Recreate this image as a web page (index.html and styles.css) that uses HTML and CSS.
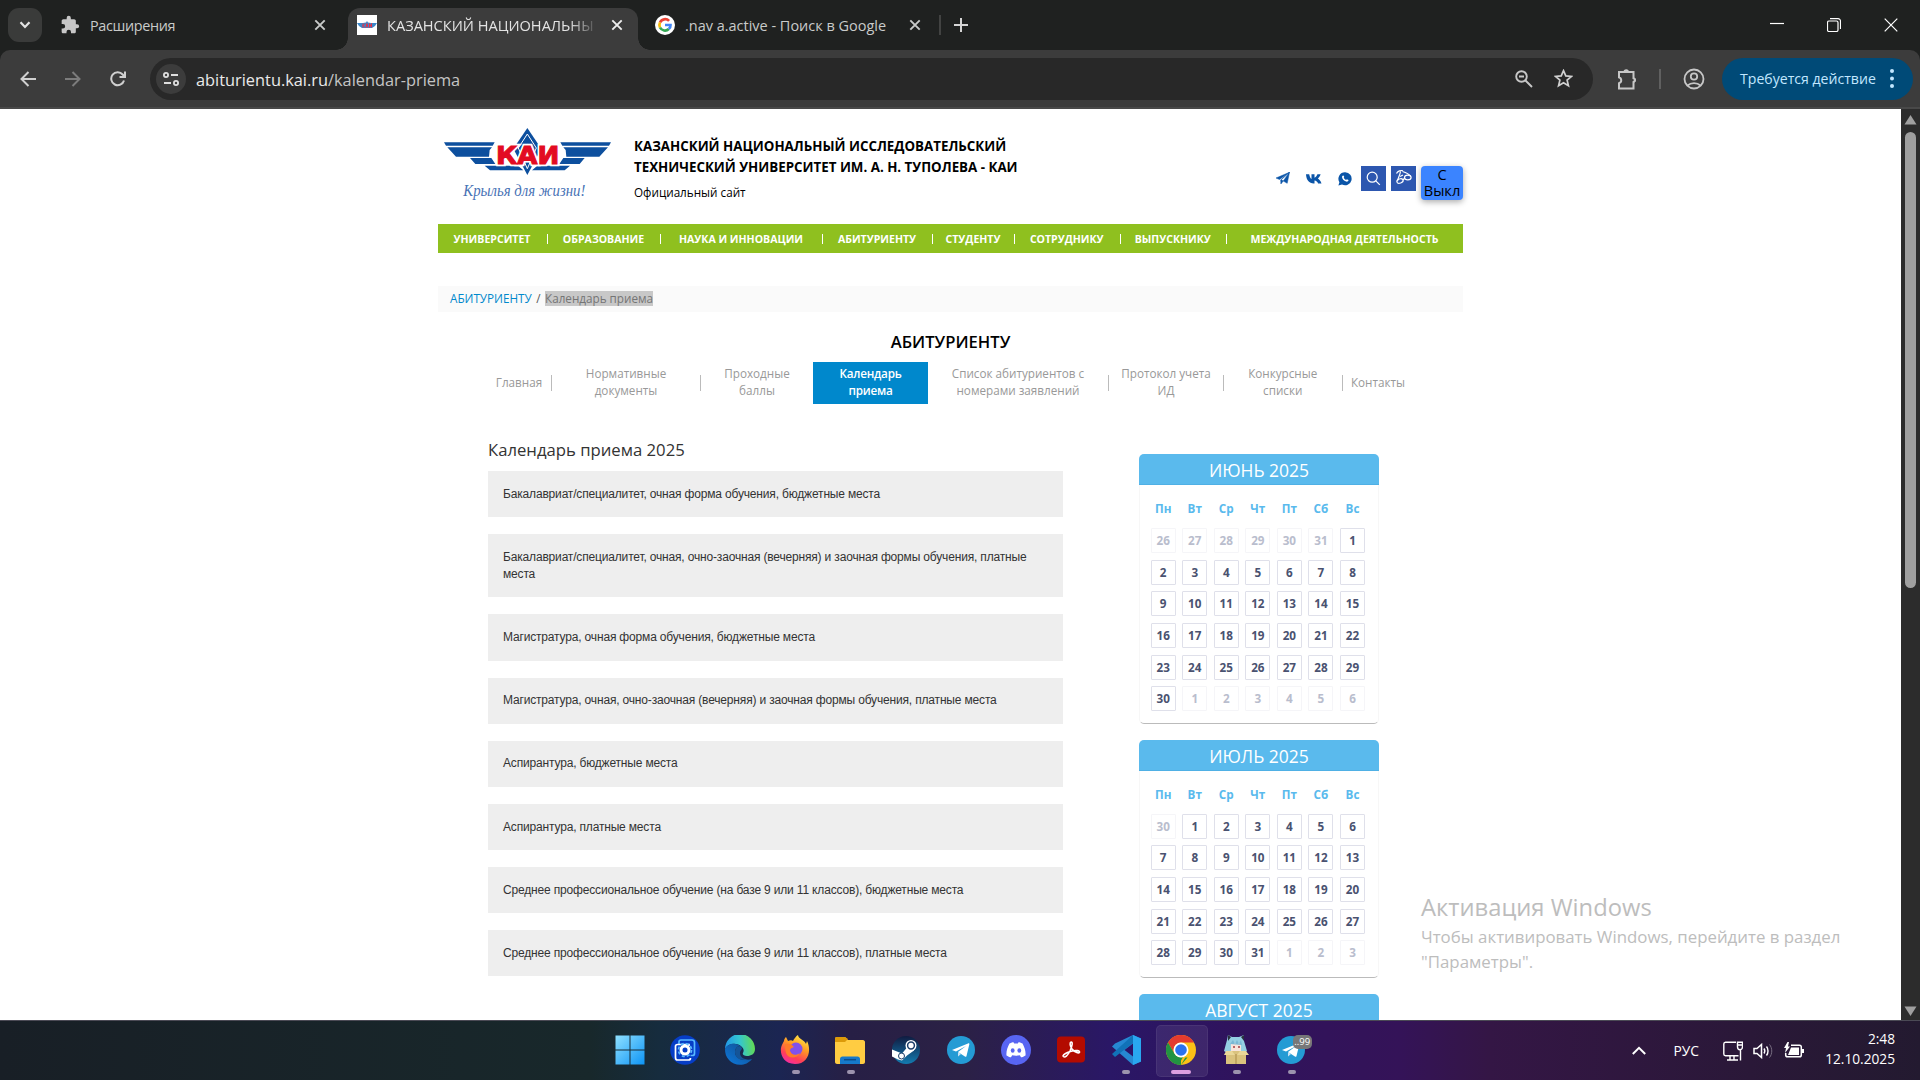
FILE: index.html
```html
<!DOCTYPE html>
<html lang="ru">
<head>
<meta charset="utf-8">
<title>Календарь приема</title>
<link rel="stylesheet" href="styles.css">
</head>
<body>
<div class="screen">
<header class="tabs">
  <span class="tab-search"><svg width="12" height="8" viewBox="0 0 12 8"><path d="M1.5 1.2 6 6l4.500-4.800" fill="none" stroke="#e3e3e3" stroke-width="2.200"/></svg></span>
  <div class="tab t1">
    <svg width="20" height="20" viewBox="0 0 24 24" fill="#c7c7c7"><path d="M20.500 11H19V7c0-1.100-.9-2-2-2h-4V3.500a2.500 2.500 0 0 0-5 0V5H4c-1.100 0-2 .9-2 2v3.800h1.500a2.700 2.700 0 0 1 0 5.400H2V20c0 1.100.9 2 2 2h3.800v-1.500a2.700 2.700 0 0 1 5.400 0V22H17c1.100 0 2-.9 2-2v-4h1.500a2.500 2.500 0 0 0 0-5z"/></svg>
    <span class="tab-title narrow">Расширения</span>
    <svg class="x" width="12" height="12" viewBox="0 0 12 12"><path d="M1.300 1.300l9.400 9.400M10.700 1.300l-9.400 9.400"/></svg>
  </div>
  <div class="tab t2">
    <svg width="20" height="20" viewBox="0 0 20 20"><path fill="#fff" d="M0 0h20v20H0z"/><path fill="#3b86c8" d="M0 8h6l3-.5L10 6l1 1.500 3 .5h6l-2 3-3 2H5l-3-2z"/><path d="M6 8.500v4M8 8.500l-2 2 2 2M9 12.500l1-4 1 4M12.500 8.500v4l2-4v4" stroke="#e2324b" fill="none"/></svg>
    <span class="tab-title fade">КАЗАНСКИЙ НАЦИОНАЛЬНЫ</span>
    <svg class="x" width="12" height="12" viewBox="0 0 12 12"><path d="M1.300 1.300l9.400 9.400M10.700 1.300l-9.400 9.400"/></svg>
  </div>
  <div class="tab t3">
    <svg width="20" height="20" viewBox="0 0 20 20"><circle cx="10" cy="10" r="10" fill="#fff"/><g fill="none" stroke-width="2.700"><path stroke="#ea4335" d="M14.100 5.900A5.600 5.600 0 0 0 5 7.500"/><path stroke="#fbbc05" d="M5 7.500a5.600 5.600 0 0 0 0 5"/><path stroke="#34a853" d="M5 12.500a5.600 5.600 0 0 0 8.800 1.600"/><path stroke="#4285f4" d="M13.800 14.100A5.300 5.300 0 0 0 15.500 10H10"/></g></svg>
    <span class="tab-title">.nav a.active - Поиск в Google</span>
    <svg class="x" width="12" height="12" viewBox="0 0 12 12"><path d="M1.300 1.300l9.400 9.400M10.700 1.300l-9.400 9.400"/></svg>
  </div>
  <i class="tab-sep"></i>
  <svg class="plus" width="14" height="14" viewBox="0 0 14 14"><path d="M7 0v14M0 7h14" stroke="#d5d5d5" stroke-width="2"/></svg>
  <div class="win">
    <svg width="14" height="14" viewBox="0 0 14 14"><path d="M0 5.500h14"/></svg>
    <svg width="14" height="14" viewBox="0 0 14 14"><rect x=".5" y="3" width="10.500" height="10.500" rx="1.500"/><path d="M3 .7h8a2.500 2.500 0 0 1 2.500 2.500V11"/></svg>
    <svg width="14" height="14" viewBox="0 0 14 14"><path d="M.7.7l12.600 12.600M13.300.7.700 13.300"/></svg>
  </div>
</header>
<div class="toolbar">
  <svg class="nb" width="16" height="16" viewBox="0 0 16 16"><path d="M16 8H1.500M8.500 1 1.500 8l7 7"/></svg>
  <svg class="nb dim" width="16" height="16" viewBox="0 0 16 16"><path d="M0 8h14.500M7.500 1l7 7-7 7"/></svg>
  <svg class="nb" width="16" height="16" viewBox="0 0 16 16"><path d="M14 9.500A6.500 6.500 0 1 1 12.700 3.500L14.800 6M15 .5V6H9.500"/></svg>
  <div class="omni">
    <span class="chip"><svg width="16" height="14" viewBox="0 0 16 14" fill="none" stroke="#dedede" stroke-width="1.800"><circle cx="3" cy="3" r="2.100"/><path d="M8 3h7M1 11h7"/><circle cx="13" cy="11" r="2.100"/></svg></span>
    <span class="url">abiturientu.kai.ru<span>/kalendar-priema</span></span>
    <svg class="lens" width="18" height="18" viewBox="0 0 18 18" fill="none" stroke="#c7c7c7" stroke-width="1.900"><circle cx="6.500" cy="6.500" r="5.300"/><path d="M10.500 10.500 17 17M4 6.500h5"/></svg>
    <svg class="star" width="19" height="19" viewBox="0 0 20 20" fill="none" stroke="#d0d0d0" stroke-width="1.800"><path d="M10 1.800l2.400 5.500 6 .5-4.600 3.900 1.400 5.900L10 14.500l-5.200 3.100 1.400-5.900L1.600 7.800l6-.5z"/></svg>
  </div>
  <svg class="ext" width="21" height="22" viewBox="0 0 21 22"><path d="M2 4h14.500v6.200a2 2 0 0 1 0 3.800v6.500H2v-5.300a3 3 0 0 0 0-5.800z" fill="none" stroke="#c7c7c7" stroke-width="2"/><path d="M6.500 4a2.700 2.700 0 0 1 5.400 0M17 9.500a2.700 2.700 0 0 1 0 5.200" fill="#c7c7c7"/></svg>
  <i class="bar-sep"></i>
  <svg class="avatar" width="22" height="22" viewBox="0 0 22 22" fill="none" stroke="#c7c7c7" stroke-width="1.800"><circle cx="11" cy="11" r="9.500"/><circle cx="11" cy="8.500" r="3.200"/><path d="M4.500 17.500c3.500-3.300 9.500-3.300 13 0"/></svg>
  <div class="action">Требуется действие<svg width="4" height="19" viewBox="0 0 4 19" fill="#c2e7ff"><circle cx="2" cy="2" r="2"/><circle cx="2" cy="9.500" r="2"/><circle cx="2" cy="17" r="2"/></svg></div>
</div>

<div class="view">
<main class="page">
  <div class="head">
    <svg class="logo" width="180" height="95" viewBox="0 0 540 285">
      <g fill="#0d4f9e"><path d="M12 67h152l-6 10H18zM22 82h134l-7 8-2 20H48z"/><path d="M513 67H361l6 10h140zM504 82H370l7 8 2 20h99z"/><path d="M90 114h64l12 18h-60zM434 114h-64l-12 18h61zM134 137h100l16 14H150zM390 137H292l-16 14h98z"/><path d="M262 24l42 62-42 79-42-79z"/></g>
      <path d="M262 42l27 42-27 62-27-62z" fill="none" stroke="#fff" stroke-width="3"/>
      <text x="168" y="131" textLength="190" lengthAdjust="spacingAndGlyphs" class="kai-edge">КАИ</text>
      <text x="168" y="131" textLength="190" lengthAdjust="spacingAndGlyphs" class="kai">КАИ</text>
      <text x="70" y="229" textLength="366" lengthAdjust="spacingAndGlyphs" class="motto">Крылья для жизни!</text>
    </svg>
    <div class="name"><b>КАЗАНСКИЙ НАЦИОНАЛЬНЫЙ ИССЛЕДОВАТЕЛЬСКИЙ<br>ТЕХНИЧЕСКИЙ УНИВЕРСИТЕТ ИМ. А. Н. ТУПОЛЕВА - КАИ</b><span>Официальный сайт</span></div>
    <div class="social">
      <svg width="14" height="13" viewBox="0 0 14 13"><path d="M13.500.3 0 6l3.500 1.500zM13.500.3 4.700 7.900 4.900 12l2-2.500zM13.500.3l-2.300 11-6-3.500z" fill="#0b55a8" stroke="#0b55a8" stroke-width=".5"/></svg>
      <svg width="16" height="10" viewBox="0 0 16 10"><path d="M0 .3h3.200C3.600 3 4.800 4.700 5.500 5V.3h3v3.500C9.600 3.500 10.800 2 11.400.3h3.200c-.4 1.800-1.800 3.400-2.700 4.200 1.100.7 2.700 2 3.600 5h-3.400C11.400 8 10.300 6.800 8.500 6.600v2.900C3.600 9.900.3 6.500 0 .3z" fill="#0b55a8"/></svg>
      <svg width="14" height="14" viewBox="0 0 14 14"><path d="M7.200.3a6.500 6.500 0 1 1-3.200 12.200L.4 13.600l1-3.400A6.500 6.500 0 0 1 7.200.3z" fill="#0b55a8"/><path d="M4.700 3.700c.9-.6 1.400.3 1.500 1.400l-.5.7c.5 1.100 1.300 1.800 2.300 2.200l.9-.8 1.600.9c0 1.200-1.300 1.800-2.400 1.500C5.800 9 4 6.500 4 5c0-.6.3-1.100.7-1.300z" fill="#fff"/></svg>
    </div>
    <span class="sq"><svg width="15" height="15" viewBox="0 0 15 15" fill="none" stroke="#fff" stroke-width="1.200"><circle cx="6.200" cy="6.200" r="5"/><path d="M9.800 9.800l4 4"/></svg></span>
    <span class="sq eye"><svg width="17" height="16" viewBox="0 0 17 16" fill="none" stroke="#fff" stroke-width="1.200"><path d="M1.500 4.500C2.500 2 6 1 8 1.800M5.500 2.500C5 6 3 9 2.500 12M7.500 2.500c3 1 6.500 2.500 8 4.500"/><ellipse cx="5" cy="12" rx="3.200" ry="2.100" transform="rotate(-20 5 12)"/><ellipse cx="12.800" cy="8.500" rx="3.300" ry="2.300"/><path d="M8 11l1.800-2M5 7.500l3-1.500"/></svg></span>
    <span class="toggle">С<br>Выкл</span>
  </div>
  <nav class="menu"><a>УНИВЕРСИТЕТ</a><a>ОБРАЗОВАНИЕ</a><a>НАУКА И ИННОВАЦИИ</a><a>АБИТУРИЕНТУ</a><a>СТУДЕНТУ</a><a>СОТРУДНИКУ</a><a>ВЫПУСКНИКУ</a><a>МЕЖДУНАРОДНАЯ ДЕЯТЕЛЬНОСТЬ</a></nav>
  <div class="crumbs"><a>АБИТУРИЕНТУ</a><i>/</i><span>Календарь приема</span></div>
  <h1>АБИТУРИЕНТУ</h1>
  <nav class="sub"><a>Главная</a><a>Нормативные<br>документы</a><a class="last">Проходные<br>баллы</a><a class="active">Календарь<br>приема</a><a>Список абитуриентов с<br>номерами заявлений</a><a>Протокол учета<br>ИД</a><a>Конкурсные<br>списки</a><a class="last">Контакты</a></nav>
  <div class="cols">
    <section class="list">
      <h2>Календарь приема 2025</h2>
      <div>Бакалавриат/специалитет, очная форма обучения, бюджетные места</div>
      <div>Бакалавриат/специалитет, очная, очно-заочная (вечерняя) и заочная формы обучения, платные места</div>
      <div>Магистратура, очная форма обучения, бюджетные места</div>
      <div>Магистратура, очная, очно-заочная (вечерняя) и заочная формы обучения, платные места</div>
      <div>Аспирантура, бюджетные места</div>
      <div>Аспирантура, платные места</div>
      <div>Среднее профессиональное обучение (на базе 9 или 11 классов), бюджетные места</div>
      <div>Среднее профессиональное обучение (на базе 9 или 11 классов), платные места</div>
    </section>
    <aside class="months">
      <section class="month"><h3>ИЮНЬ 2025</h3>
        <div class="week"><b>Пн</b><b>Вт</b><b>Ср</b><b>Чт</b><b>Пт</b><b>Сб</b><b>Вс</b></div>
        <div class="days"><s>26</s><s>27</s><s>28</s><s>29</s><s>30</s><s>31</s><b>1</b><b>2</b><b>3</b><b>4</b><b>5</b><b>6</b><b>7</b><b>8</b><b>9</b><b>10</b><b>11</b><b>12</b><b>13</b><b>14</b><b>15</b><b>16</b><b>17</b><b>18</b><b>19</b><b>20</b><b>21</b><b>22</b><b>23</b><b>24</b><b>25</b><b>26</b><b>27</b><b>28</b><b>29</b><b>30</b><s>1</s><s>2</s><s>3</s><s>4</s><s>5</s><s>6</s></div>
      </section>
      <section class="month"><h3>ИЮЛЬ 2025</h3>
        <div class="week"><b>Пн</b><b>Вт</b><b>Ср</b><b>Чт</b><b>Пт</b><b>Сб</b><b>Вс</b></div>
        <div class="days"><s>30</s><b>1</b><b>2</b><b>3</b><b>4</b><b>5</b><b>6</b><b>7</b><b>8</b><b>9</b><b>10</b><b>11</b><b>12</b><b>13</b><b>14</b><b>15</b><b>16</b><b>17</b><b>18</b><b>19</b><b>20</b><b>21</b><b>22</b><b>23</b><b>24</b><b>25</b><b>26</b><b>27</b><b>28</b><b>29</b><b>30</b><b>31</b><s>1</s><s>2</s><s>3</s></div>
      </section>
      <section class="month"><h3>АВГУСТ 2025</h3></section>
    </aside>
  </div>
</main>
<div class="scroll"><svg width="13" height="10" viewBox="0 0 13 10"><path d="M6.500 0 12.500 9.500H.5z"/></svg><i></i><svg class="down" width="13" height="10" viewBox="0 0 13 10"><path d="M6.500 10 12.500.5H.5z"/></svg></div>
<div class="watermark"><p>Активация Windows</p>Чтобы активировать Windows, перейдите в раздел<br>"Параметры".</div>
</div>

<footer class="taskbar">
  <div class="apps">
    <span><svg width="30" height="30" viewBox="0 0 30 30"><defs><linearGradient id="w" x1="0" y1="0" x2="1" y2="1"><stop stop-color="#8fe0ff"/><stop offset="1" stop-color="#0d94f5"/></linearGradient></defs><path fill="url(#w)" d="M.5.500h14v14H.500zM15.500.500h14v14h-14zM.500 15.500h14v14H.500zM15.500 15.500h14v14h-14z"/></svg></span>
    <span><svg width="30" height="30" viewBox="0 0 30 30"><circle cx="15" cy="15" r="14.800" fill="#063dc6"/><g fill="none" stroke-width="1.700"><path d="M9 9V7c0-1 1-2 2-2h11c1.500 0 2.500 1 2.500 2.500v11c0 1-1 2-2 2h-2" stroke="#58b8ff"/><path d="M19 11V9.500H7.500c-1.500 0-2 1-2 2v11c0 1.500 1 2.500 2 2.500h11c1.500 0 2-1 2-2" stroke="#fff"/><circle cx="15" cy="15" r="4" stroke="#fff" stroke-width="3"/><circle cx="15" cy="15" r="6.500" stroke="#58b8ff" stroke-dasharray="3 2.100"/></g></svg></span>
    <span><svg width="30" height="30" viewBox="0 0 30 30"><defs><linearGradient id="e1" y1=".5" y2=".4"><stop stop-color="#2196e8"/><stop offset=".5" stop-color="#34c6d0"/><stop offset="1" stop-color="#65dc4c"/></linearGradient><linearGradient id="e2" y1="1" x2="1" y2="0"><stop stop-color="#0d79dc"/><stop offset="1" stop-color="#124c8d"/></linearGradient></defs><path d="M0 14A15 15 0 0 1 30 14c0 5-4 7-8 7-3 0-5-1.500-4-3 1-2 1-4-1-6C12 7 3 8 0 14z" fill="url(#e1)"/><path d="M0 14c2-5 10-7 15-3-3 0-5 3-5 6 0 6 7 10 17 7-6 8-18 7-23 1-3-3-4-7-4-11z" fill="url(#e2)"/><path d="M15 11c-3 0-5 3-5 6 0 6 7 11 17 6-6 3-12 0-12-5 0-2 1-3 2-4 0-1-1-3-2-3z" fill="#155598"/></svg></span>
    <span class="run"><svg width="30" height="30" viewBox="0 0 30 30"><defs><linearGradient id="f" x1=".8" y1="0" x2=".3" y2="1"><stop stop-color="#fff14a"/><stop offset=".4" stop-color="#ff9b23"/><stop offset=".75" stop-color="#ff4056"/><stop offset="1" stop-color="#f32ba4"/></linearGradient></defs><path d="M4 6c0-2 1-3 2-4l2 4c2-1 4-1 5 0 1-2 3-5 5-6 0 4 7 5 8 9l1-3c5 10 1 23-12 23C4 29 0 20 1 13c.500-3 2-5 3-7z" fill="url(#f)"/><circle cx="16" cy="14" r="6.500" fill="#8151ec"/><path d="M5 9c4-1 7 0 9 3-2 1-4 1-4 4 1 4 6 5 10 2-3 6-12 6-14 0-1-4-1-6-1-9z" fill="#ff7b29"/></svg></span>
    <span class="run"><svg width="30" height="30" viewBox="0 0 30 30"><path d="M0 3.500C0 2.500 1 2 2 2h8l3 3h15c1 0 2 1 2 2v20c0 1-1 2-2 2H2c-1 0-2-1-2-2z" fill="#ffcc42"/><path d="M0 3.500C0 2.500 1 2 2 2h8l3 2-3 3H0z" fill="#dc9a09"/><path d="M5 29v-5c0-1.500 1-2.500 2.500-2.500h15c1.500 0 2.500 1 2.500 2.500v5z" fill="#1679ca"/><path d="M9 24.700h12" stroke="#0b4c8a" stroke-width="1.500"/></svg></span>
    <span><svg width="30" height="30" viewBox="0 0 30 30"><defs><linearGradient id="s" x2="0" y2="1"><stop stop-color="#101b40"/><stop offset="1" stop-color="#137bb0"/></linearGradient></defs><circle cx="15" cy="15" r="14" fill="url(#s)"/><path d="M1 14.500l10 4 5-6 6-1 1 4-7 5-5 5-4-1-6-3z" fill="#fff"/><circle cx="20" cy="10.500" r="5.500" fill="#fff"/><circle cx="20" cy="10.500" r="3.400" fill="none" stroke="#183b67" stroke-width="1.500"/><circle cx="10.500" cy="21" r="3" fill="none" stroke="#183b67"/></svg></span>
    <span><svg width="30" height="30" viewBox="0 0 30 30"><circle cx="15" cy="15" r="14" fill="#249bd4"/><path d="M6 15 22 8.500c1-.4 1.500.2 1.300 1L20.500 21c-.2 1-1 1-1.600.6L12 17l8-6-10 5.500z" fill="#fff"/><path d="M12 17v4.500l3-2.500z" fill="#c8e3f3"/></svg></span>
    <span><svg width="30" height="30" viewBox="0 0 30 30"><circle cx="15" cy="15" r="15" fill="#5865f2"/><path d="M8.500 8.500c2-1 3-1.200 4-1.300l.7 1.300h3.600l.7-1.300c1 .1 2 .3 4 1.300 2 3.500 3.500 8 3 12-2 1.300-3.500 1.800-4.500 1.800l-1.200-2c-2.500.6-5 .6-7.600 0l-1.200 2c-1 0-2.500-.5-4.500-1.800-.5-4 1-8.500 3-12z" fill="#fff"/><ellipse cx="11.700" cy="15.500" rx="1.900" ry="2.200" fill="#5865f2"/><ellipse cx="18.300" cy="15.500" rx="1.900" ry="2.200" fill="#5865f2"/></svg></span>
    <span><svg width="30" height="30" viewBox="0 0 30 30"><rect x="1" y="1.500" width="28" height="26" rx="4" fill="#b30b00"/><path d="M7 21c1-3 6-4 9-5 4-1 8-.5 7.500 1.300-1 1.500-5-.3-7.500-3.300-2-2.500-2.500-6.500-1-7 2-.3 1.300 4-1 9-2 4-5.500 8-7 5z" fill="none" stroke="#fff" stroke-width="1.600"/></svg></span>
    <span class="run"><svg width="30" height="30" viewBox="0 0 30 30"><path d="M22 0l8 3.500v23L22 30 1 11.500 4 8.500z" fill="#2688d2"/><path d="M1 19l3 3L22 8V0z" fill="#1172b8"/><path d="M22 0l8 3.500v23L22 30z" fill="#29a7f0"/><path d="M22 8.500v13L13.500 15z" fill="#2b146a"/></svg></span>
    <span class="run on"><svg width="30" height="30" viewBox="0 0 30 30"><circle cx="15" cy="15" r="15" fill="#fbc116"/><path d="M2 7.500A15 15 0 0 1 28 7.500H15a7.500 7.500 0 0 0-6.500 11.200z" fill="#e33b2e"/><path d="M2 7.500 8.500 18.700A7.500 7.500 0 0 0 15 22.500h6.500L15 30A15 15 0 0 1 2 7.500z" fill="#229342"/><path d="M15 30l6.500-11.200L15 22.500z" fill="#fbc116"/><path d="M8.500 18.700A7.500 7.500 0 0 0 17 22l-4.300 7.800C7 28 4 24 2 20z" fill="#229342"/><circle cx="15" cy="15" r="7.500" fill="#fff"/><circle cx="15" cy="15" r="5.800" fill="#2b72ee"/></svg></span>
    <span class="run"><svg width="30" height="30" viewBox="0 0 30 30"><path d="M6 5 7 0l4 2h7l5-2v6l3 10-4 3H8l-5-3z" fill="#95cfe3"/><path d="M7 0l3 2-3 4zM23 0l-3 2 3 4z" fill="#29313d"/><path d="M10 8h10v8H10z" fill="#f7e4dc"/><path d="M9 9l3-4 2 4 2-4 2 4 2-4 1 5" fill="#79b8d4"/><path d="M12 12h2M17 12h2" stroke="#a33c40" stroke-width="1.500"/><path d="M5 16h20v13H5z" fill="#dac27d"/><path d="M5 16l6 0 3 4H3zM25 16h-6l-3 4h12z" fill="#ead798"/><path d="M15 19v10" stroke="#a98a48"/></svg></span>
    <span class="run"><svg width="30" height="30" viewBox="0 0 30 30"><circle cx="15" cy="15" r="14" fill="#249bd4"/><path d="M6 15 22 8.500c1-.4 1.500.2 1.300 1L20.500 21c-.2 1-1 1-1.600.6L12 17l8-6-10 5.500z" fill="#fff"/><path d="M12 17v4.500l3-2.500z" fill="#c8e3f3"/></svg><em>..99</em></span>
  </div>
  <div class="tray">
    <svg class="chev" width="14" height="9" viewBox="0 0 14 9"><path d="M.8 8 7 1.800 13.200 8" stroke-width="2"/></svg>
    <span class="lang">РУС</span>
    <svg class="net" width="20" height="20" viewBox="0 0 20 20"><path d="M13 1.200H2.500C1.500 1.200.800 2 .800 3v10c0 1 .7 1.700 1.700 1.700h13M7 15v3.500M11 15v3.500M4 19h11M17.500 9v10.500M14.500 1.200h5v4.500c0 2-1 3-2.500 3s-2.500-1-2.500-3zM15 4h4" stroke-width="1.400"/></svg>
    <svg class="vol" width="20" height="16" viewBox="0 0 20 16"><path d="M1 5.500h3L8.500 1.500v13L4 10.500H1z" stroke-width="1.500"/><path d="M11 5.500c1 1.500 1 3.500 0 5M13.500 3.500c2 2.500 2 6.500 0 9" stroke-width="1.400"/><path d="M16.500 1.500c3 3.500 3 9.500 0 13" stroke="#766c80"/></svg>
    <svg class="bat" width="20" height="17" viewBox="0 0 20 17"><path d="M7 3.200h8.500c1 0 1.800.8 1.800 1.800v8c0 1-.8 1.800-1.800 1.800h-12c-1 0-1.800-.8-1.800-1.800v-2" stroke-width="1.500"/><path d="M7 5.500h8v7.500H4zM18 7h2v4h-2zM3.500 0 0 6h2L1 11l5-6.500H4L5 0z" fill="#fff" stroke="none"/></svg>
    <div class="clock">2:48<br>12.10.2025</div>
  </div>
</footer>
</div>
</body>
</html>
```
FILE: styles.css
```css
* { box-sizing: border-box; }
body { margin: 0; font-family: "Open Sans", "Noto Sans", sans-serif; background: #1f2120; }
svg { display: block; flex: none; }
i, em { font-style: normal; }
.screen { width: 1920px; height: 1080px; overflow: hidden; display: flex; flex-direction: column; }

/* browser tabs */
.tabs { height: 50px; display: flex; align-items: center; background: #1f2120; color: #c9cbca; font-size: 14.4px; flex: none; }
.tab-search { width: 34px; height: 34px; margin-left: 8px; border-radius: 11px; background: #3a3b3a; display: flex; align-items: center; justify-content: center; }
.tab { display: flex; align-items: center; height: 42px; margin-top: 8px; padding-bottom: 8px; position: relative; }
.tab-title { white-space: nowrap; margin-right: auto; }
.narrow { letter-spacing: -.35px; }
.x { stroke: #c9cbca; stroke-width: 1.900; fill: none; }
.t1 { width: 306px; padding-left: 18px; padding-right: 22px; }
.t1 .tab-title { margin-left: 10px; }
.t2 { width: 290px; padding-left: 9px; padding-right: 15px; background: #3c3c3c; border-radius: 12px 12px 0 0; color: #e3e3e3; }
.t2 .x { stroke: #eee; }
.t2::before, .t2::after { content: ""; position: absolute; bottom: 0; width: 12px; height: 12px; }
.t2::before { left: -12px; background: radial-gradient(circle at 0 0, transparent 11.500px, #3c3c3c 12px); }
.t2::after { right: -12px; background: radial-gradient(circle at 100% 0, transparent 11.500px, #3c3c3c 12px); }
.t2 .tab-title { margin-left: 10px; width: 210px; flex: none; font-size: 14.600px; }
.fade { -webkit-mask-image: linear-gradient(90deg, #000 182px, transparent 212px); mask-image: linear-gradient(90deg, #000 182px, transparent 212px); }
.t3 { width: 301px; padding-left: 17px; padding-right: 18px; }
.t3 .tab-title { margin-left: 10px; font-size: 14.47px; }
.tab-sep { width: 2px; height: 20px; background: #424342; }
.plus { margin-left: 13px; }
.win { margin-left: auto; display: flex; gap: 43px; padding-right: 22px; }
.win svg { fill: none; stroke: #fff; stroke-width: 1.200; }

/* address bar */
.toolbar { height: 59px; flex: none; display: flex; align-items: center; background: #3c3c3c; border-radius: 10px 10px 0 0; border-bottom: 2px solid #494949; padding: 0 7px 0 19.500px; }
.nb { fill: none; stroke: #d0d0d0; stroke-width: 2; margin-right: 29px; }
.dim { stroke: #7c7c7c; }
.omni { width: 1443px; height: 42px; margin-left: -4.500px; border-radius: 21px; background: #282828; display: flex; align-items: center; padding: 0 20px 0 6px; }
.chip { width: 30px; height: 30px; border-radius: 15px; background: #3c3c3c; display: flex; align-items: center; justify-content: center; }
.url { margin-left: 10px; font-size: 16.350px; line-height: 22px; color: #eaeaea; padding-top: 2px; }
.url span { color: #c4c4c4; }
.lens { margin-left: auto; margin-right: 21.500px; }
.ext { margin-left: 24px; }
.bar-sep { width: 2px; height: 20px; background: #606060; margin-left: 21px; }
.avatar { margin-left: 21.500px; }
.action { margin-left: auto; width: 191px; height: 42px; border-radius: 21px; background: #004a77; color: #c2e7ff; font-size: 14.1px; display: flex; align-items: center; justify-content: space-between; padding: 0 19px 0 18px; white-space: nowrap; }

/* page */
.view { height: 911px; flex: none; background: #fff; position: relative; display: flex; justify-content: space-between; overflow: hidden; }
.page { width: 1025px; margin-left: 438px; }
.head { height: 115px; display: flex; align-items: flex-start; padding-top: 11px; }
.logo { margin-left: 2px; }
.kai, .kai-edge { font: 700 72px "DejaVu Sans", sans-serif; fill: #e30b22; stroke: #e30b22; stroke-width: 3px; }
.kai-edge { stroke: #fff; stroke-width: 13px; }
.motto { font: italic 48px "Liberation Serif", serif; fill: #4872b5; }
.name { margin: 16px auto 0 14px; font-size: 13.33px; line-height: 21.3px; color: #000; white-space: nowrap; }
.name b { display: block; }
.name span { display: block; font-size: 11.7px; margin-top: 3px; }
.social { display: flex; gap: 16px; align-items: center; height: 25px; margin: 46px 9px 0 0; }
.sq { width: 25px; height: 25px; background: #2d57b0; margin: 46px 5px 0 0; display: flex; align-items: center; justify-content: center; }
.eye { padding-bottom: 4px; }
.toggle { width: 42px; height: 34px; margin-top: 46px; border-radius: 4px; background: #3b84ff; box-shadow: 0 2px 6px #0005; font-size: 14.6px; line-height: 16px; text-align: center; color: #000; }
.menu { height: 29px; background: #8fc01f; display: grid; grid-template-columns: 110px 113px 162px 110px 82px 105.5px 106.5px 236px; align-items: center; color: #fff; font-size: 10.55px; font-weight: 700; }
.menu a { text-align: center; line-height: 10px; border-right: 1px solid #fff; white-space: nowrap; padding-right: 1px; }
.menu a:last-child { border: 0; }
.crumbs { height: 26px; margin-top: 33px; padding: 0 0 2px 12px; background: #fafafa; display: flex; align-items: center; font-size: 11.7px; color: #555; }
.crumbs a { color: #0088cc; }
.crumbs i { margin: 0 4.500px 0 4.500px; }
.crumbs span { background: #c8c8c8; color: #757575; line-height: 15px; }
h1, h2, h3, p { margin: 0; font-weight: 400; }
h1 { margin-top: 18px; font-size: 16.6px; font-weight: 600; line-height: 24px; text-align: center; color: #000; }
.sub { margin: 8px 0 0 49px; height: 42px; display: grid; grid-template-columns: 65px 149px 112px 115px 181px 115px 118.5px 71px; font-size: 11.7px; line-height: 17px; color: #999; text-align: center; }
.sub a { display: flex; align-items: center; justify-content: center; position: relative; white-space: nowrap; padding: 0 1px 2px 0; }
.sub a::after { content: ""; position: absolute; right: 0; top: 13px; width: 1px; height: 16px; background: #bbb; }
.sub .last, .sub .active { padding-right: 0; }
.sub .last::after, .sub .active::after { display: none; }
.sub .active { background: #0088cc; color: #fff; font-weight: 600; letter-spacing: -.2px; }
.cols { display: flex; padding-left: 50px; }
.list { width: 575px; padding-top: 35px; font: 12px/17.100px "Liberation Sans", sans-serif; letter-spacing: -.170px; color: #333; }
.list h2 { font: 16.700px/22px "Open Sans", sans-serif; letter-spacing: 0; margin-bottom: 10px; color: #333; }
.list div { background: #eee; padding: 14.700px 15px 14.400px; margin-bottom: 17px; }
.months { width: 240px; margin: 50px 0 0 76px; }
.month { margin-bottom: 15.500px; border-radius: 5px; border: 1px solid #f7f7f7; border-top: 0; border-bottom: 1px solid #bbb; }
.month h3 { margin: 0 -1px; height: 31px; border-radius: 5px 5px 0 0; background: #5abaed; border-bottom: 1px solid #4fb0e5; color: #fff; font-size: 17.500px; line-height: 32px; text-align: center; }
.week, .days { display: grid; grid-template-columns: repeat(7, 25px); column-gap: 6.550px; padding-left: 10.700px; font-size: 11.7px; text-align: center; }
.week { height: 43px; line-height: 46px; color: #5abaed; }
.days { row-gap: 6.650px; padding-bottom: 12px; color: #4a5270; }
.days b, .days s { height: 25px; line-height: 23px; border: 1px solid #dfe0ea; text-decoration: none; font-weight: 700; border-radius: 1px; }
.days s { border-color: #f5f5f8; color: #b9bdcd; }
.scroll { width: 19px; background: #2c2c2c; display: flex; flex-direction: column; align-items: center; padding: 6px 0 4px; }
.scroll svg { fill: #a0a0a0; }
.scroll i { width: 11px; height: 456px; margin-top: 7px; border-radius: 6px; background: #9f9f9f; }
.scroll .down { margin-top: auto; }
.watermark { position: absolute; left: 1421px; top: 781px; color: #bdbdbd; font-size: 16.850px; line-height: 25px; white-space: nowrap; }
.watermark p { font-size: 23.750px; line-height: 34px; }

/* taskbar */
.taskbar { height: 60px; flex: none; display: flex; border-top: 1px solid #4b4a55; background: linear-gradient(90deg, #181f26 0, #18282b 590px, #162c3e 660px, #1b2552 780px, #271f45 850px, #2b2145 960px, #2a1766 1110px, #30135c 1250px, #341358 1400px, #341645 1490px, #2a1838 1750px, #231a30); }
.apps { margin-left: 602.500px; display: flex; }
.apps span { width: 55.100px; height: 59px; display: flex; align-items: center; justify-content: center; position: relative; padding-bottom: 1px; }
.apps .run::after { content: ""; position: absolute; bottom: 6px; left: 24px; width: 8px; height: 4px; border-radius: 2px; background: #9c93ae; }
.apps .on::before { content: ""; position: absolute; left: 2.500px; top: 4px; width: 50px; height: 50px; border-radius: 5px; background: #ffffff14; border: 1px solid #ffffff10; }
.apps .on svg { position: relative; }
.apps .on::after { width: 20px; left: 18px; background: #dd9fe0; }
.apps em { position: absolute; right: 7px; top: 14px; width: 19px; height: 14px; border-radius: 5px; background: #777779; color: #fff; font-size: 9.500px; line-height: 13px; text-align: center; }
.tray { margin-left: auto; display: flex; align-items: center; color: #fff; padding-right: 25px; }
.tray svg { fill: none; stroke: #fff; }
.lang { font-size: 13.800px; margin: 0 24px 0 27px; }
.vol { margin-left: 10px; }
.bat { margin-left: 11px; }
.clock { margin-left: 19px; width: 72px; font-size: 13.700px; line-height: 20px; text-align: right; padding-bottom: 3px; }
```
